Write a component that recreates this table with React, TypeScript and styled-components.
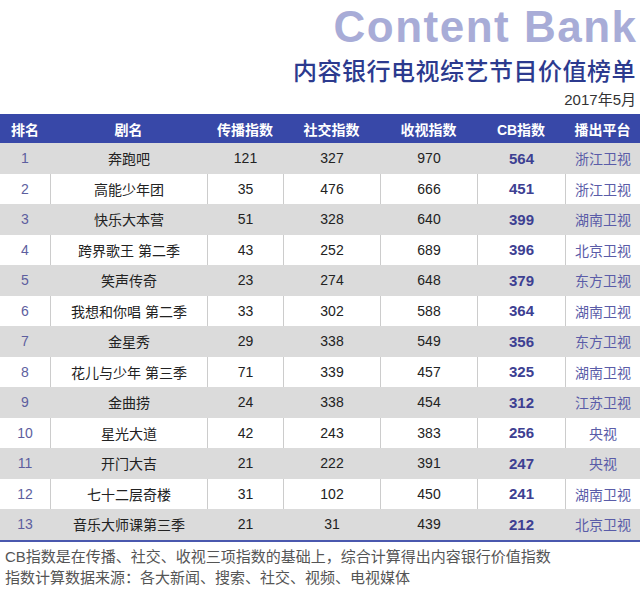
import React from "react";
import styled, { createGlobalStyle } from "styled-components";

const GlobalStyle = createGlobalStyle`
  html, body {
    margin: 0;
    padding: 0;
    background: #ffffff;
  }
  body {
    font-family: "Liberation Sans", "Noto Sans CJK SC", sans-serif;
  }
`;

const columns = "50px 157px 76px 97px 97px 88px 75px";

const headers = ["排名", "剧名", "传播指数", "社交指数", "收视指数", "CB指数", "播出平台"];

const rows: [number, string, number, number, number, number, string][] = [
  [1, "奔跑吧", 121, 327, 970, 564, "浙江卫视"],
  [2, "高能少年团", 35, 476, 666, 451, "浙江卫视"],
  [3, "快乐大本营", 51, 328, 640, 399, "湖南卫视"],
  [4, "跨界歌王 第二季", 43, 252, 689, 396, "北京卫视"],
  [5, "笑声传奇", 23, 274, 648, 379, "东方卫视"],
  [6, "我想和你唱 第二季", 33, 302, 588, 364, "湖南卫视"],
  [7, "金星秀", 29, 338, 549, 356, "东方卫视"],
  [8, "花儿与少年 第三季", 71, 339, 457, 325, "湖南卫视"],
  [9, "金曲捞", 24, 338, 454, 312, "江苏卫视"],
  [10, "星光大道", 42, 243, 383, 256, "央视"],
  [11, "开门大吉", 21, 222, 391, 247, "央视"],
  [12, "七十二层奇楼", 31, 102, 450, 241, "湖南卫视"],
  [13, "音乐大师课第三季", 21, 31, 439, 212, "北京卫视"],
];

export default function App() {
  return (
    <Page>
      <GlobalStyle />
      <TitleBlock>
        <BrandTitle>Content Bank</BrandTitle>
        <SubTitle>内容银行电视综艺节目价值榜单</SubTitle>
        <DateLine>2017年5月</DateLine>
      </TitleBlock>
      <Table>
        <HeadRow>
          {headers.map((h) => (
            <HeadCell key={h}>{h}</HeadCell>
          ))}
        </HeadRow>
        {rows.map((r, i) => (
          <Row key={r[0]} $shaded={i % 2 === 0}>
            <RankCell>{r[0]}</RankCell>
            <Cell>{r[1]}</Cell>
            <Cell>{r[2]}</Cell>
            <Cell>{r[3]}</Cell>
            <Cell>{r[4]}</Cell>
            <ScoreCell>{r[5]}</ScoreCell>
            <PlatformCell>{r[6]}</PlatformCell>
          </Row>
        ))}
      </Table>
      <Notes>
        <NoteLine>CB指数是在传播、社交、收视三项指数的基础上，综合计算得出内容银行价值指数</NoteLine>
        <NoteLine>指数计算数据来源：各大新闻、搜索、社交、视频、电视媒体</NoteLine>
      </Notes>
    </Page>
  );
}

const Page = styled.div`
  width: 640px;
  height: 591px;
  overflow: hidden;
  background: #ffffff;
`;

const TitleBlock = styled.div`
  display: flex;
  flex-direction: column;
  align-items: flex-end;
  padding-right: 4px;
`;

const BrandTitle = styled.div`
  margin-top: 5px;
  font-family: "Liberation Sans", Arial, sans-serif;
  font-size: 44px;
  line-height: 44px;
  font-weight: bold;
  letter-spacing: 1.5px;
  margin-right: -1.5px;
  color: #a8acd7;
`;

const SubTitle = styled.div`
  margin-top: 6px;
  font-family: "Noto Sans CJK SC", sans-serif;
  font-size: 24px;
  line-height: 30px;
  font-weight: 500;
  letter-spacing: 0.5px;
  color: #2c3a8e;
`;

const DateLine = styled.div`
  margin-top: 5px;
  font-size: 15px;
  line-height: 20px;
  color: #333333;
`;

const Table = styled.div`
  margin-top: 4px;
  display: flex;
  flex-direction: column;
`;

const HeadRow = styled.div`
  display: grid;
  grid-template-columns: ${columns};
  height: 29px;
  background: #3848a8;
`;

const HeadCell = styled.div`
  display: flex;
  align-items: center;
  justify-content: center;
  color: #ffffff;
  font-size: 14px;
  font-weight: bold;
`;

const Row = styled.div<{ $shaded: boolean }>`
  display: grid;
  grid-template-columns: ${columns};
  height: 30.5px;
  background: ${(p) => (p.$shaded ? "#dbdbdb" : "#ffffff")};

  & > div + div {
    border-left: 1px solid ${(p) => (p.$shaded ? "#dbdbdb" : "#cccccc")};
  }
`;

const Cell = styled.div`
  display: flex;
  align-items: center;
  justify-content: center;
  font-size: 14px;
  color: #222222;
`;

const RankCell = styled(Cell)`
  color: #5d5e9e;
`;

const ScoreCell = styled(Cell)`
  font-size: 15px;
  font-weight: bold;
  color: #3d4092;
`;

const PlatformCell = styled(Cell)`
  color: #5a5ca8;
`;

const Notes = styled.div`
  border-top: 2px solid #4a58ae;
  padding: 4px 0 0 5px;
`;

const NoteLine = styled.div`
  font-size: 15px;
  line-height: 21px;
  color: #555555;
  white-space: nowrap;
`;
